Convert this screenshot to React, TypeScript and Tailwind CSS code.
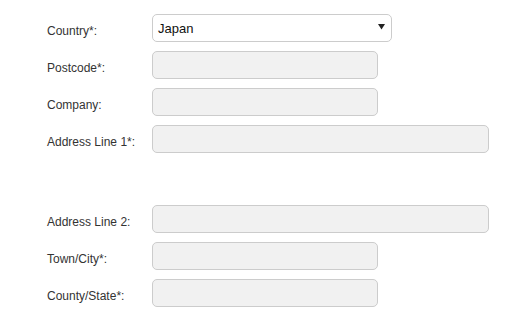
import React from "react";

const font = { fontFamily: '"Liberation Sans", Arial, sans-serif' };

function Row({ label, width, children, className = "" }: { label: string; width?: string; children?: React.ReactNode; className?: string }) {
  return (
    <div className={`flex items-start ${className}`}>
      <div className="w-[105px] shrink-0 pt-[9px] text-[12px] leading-4 text-[#333333]">{label}</div>
      {children ?? (
        <div className={`h-[28px] ${width} rounded-[5px] border border-[#cccccc] bg-[#f1f1f1]`} />
      )}
    </div>
  );
}

export default function App() {
  return (
    <div className="min-h-[314px] w-[517px] bg-white pl-[47px] pt-[14px]" style={font}>
      <div className="flex flex-col gap-[9px]">
        <Row label="Country*:">
          <div className="relative flex h-[28px] w-[240px] items-center rounded-[5px] border border-[#cccccc] bg-white pl-[5px] pt-[1px] text-[13px] text-[#111111]">
            Japan
            <svg className="absolute right-[6px] top-[9px]" width="7" height="6" viewBox="0 0 7 6">
              <path d="M0 0 H7 L3.5 5.5 Z" fill="#222222" />
            </svg>
          </div>
        </Row>
        <Row label="Postcode*:" width="w-[226px]" />
        <Row label="Company:" width="w-[226px]" />
        <Row label="Address Line 1*:" width="w-[337px]" />
        <Row label="Address Line 2:" width="w-[337px]" className="mt-[43px]" />
        <Row label="Town/City*:" width="w-[226px]" />
        <Row label="County/State*:" width="w-[226px]" />
      </div>
    </div>
  );
}
